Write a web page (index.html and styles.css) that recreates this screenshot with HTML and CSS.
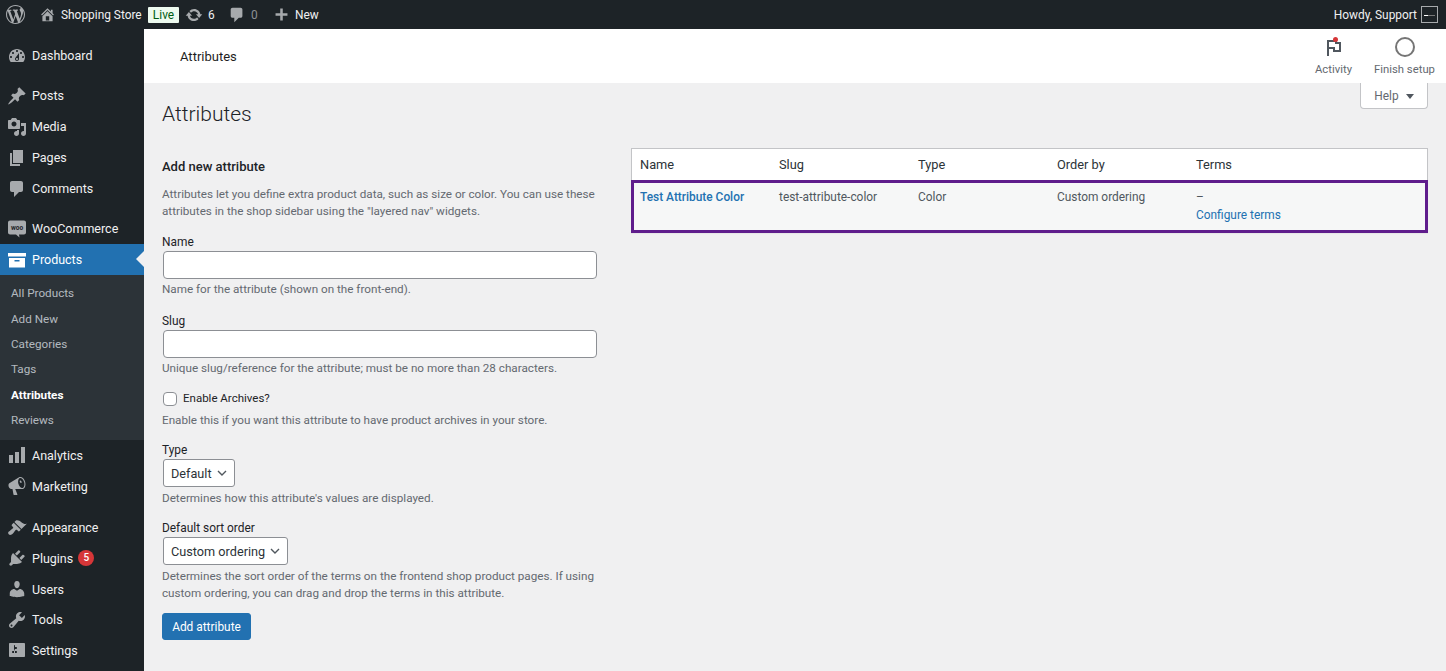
FILE: index.html
```html
<!DOCTYPE html>
<html lang="en">
  <head>
    <meta charset="UTF-8" />
    <title>Attributes</title>
    <link rel="stylesheet" href="styles.css">
  </head>

  <body>
    <header class="adminbar">
      <div class="bar-left">
        <svg class="bar-logo" viewBox="0 0 20 20"><path fill-rule="evenodd" d="M20 10c0-5.51-4.49-10-10-10C4.48 0 0 4.49 0 10c0 5.52 4.48 10 10 10 5.51 0 10-4.48 10-10zM7.78 15.37L4.37 6.22c.55-.02 1.17-.08 1.17-.08.5-.06.44-1.13-.06-1.11 0 0-1.45.11-2.37.11-.18 0-.37 0-.58-.01C4.12 2.69 6.87 1.11 10 1.11c2.33 0 4.45.87 6.05 2.34-.68-.11-1.65.39-1.65 1.58 0 .74.45 1.36.9 2.1.35.61.55 1.36.55 2.46 0 1.49-1.4 5-1.4 5l-3.03-8.37c.54-.02.82-.17.82-.17.5-.05.44-1.25-.06-1.22 0 0-1.44.12-2.38.12-.87 0-2.33-.12-2.33-.12-.5-.03-.56 1.2-.06 1.22l.92.08 1.26 3.41zM17.41 10c.24-.64.74-1.87.43-4.25.7 1.29 1.05 2.71 1.05 4.25 0 3.29-1.73 6.24-4.4 7.78.97-2.59 1.94-5.2 2.92-7.78zM6.1 18.09C3.12 16.65 1.11 13.53 1.11 10c0-1.3.23-2.48.72-3.59C3.25 10.3 4.67 14.2 6.1 18.09zm4.03-6.63l2.58 6.98c-.86.29-1.76.45-2.71.45-.79 0-1.57-.11-2.29-.33.81-2.38 1.62-4.74 2.42-7.1z"/></svg>
        <svg class="bar-home" viewBox="0 0 20 20"><path fill-rule="evenodd" d="M16 8.5l1.53 1.53-1.06 1.06L10 4.62l-6.47 6.47-1.06-1.06L10 2.5l4 4v-2h2v4zm-6-2.46l6 5.99V18H4v-5.97zM12 17v-5H8v5h4z"/></svg>
        <span class="bar-site">Shopping Store</span>
        <span class="bar-live">Live</span>
        <svg class="bar-update" viewBox="0 0 20 20"><path d="M10.2 3.28c3.53 0 6.43 2.61 6.92 6h2.08l-3.5 4-3.5-4h2.32c-.45-1.97-2.21-3.45-4.32-3.45-1.45 0-2.73.71-3.54 1.78L4.95 5.66C6.23 4.2 8.11 3.28 10.2 3.28zm-.4 13.44c-3.52 0-6.43-2.61-6.92-6H.8l3.5-4c1.17 1.33 2.33 2.67 3.5 4H5.48c.45 1.97 2.21 3.45 4.32 3.45 1.45 0 2.73-.71 3.54-1.78l1.71 1.95c-1.28 1.46-3.15 2.38-5.25 2.38z"/></svg>
        <span class="bar-count">6</span>
        <svg class="bar-comment" viewBox="0 0 20 20"><path d="M5 2h9c1.1 0 2 .9 2 2v7c0 1.1-.9 2-2 2h-2l-5 5v-5H5c-1.1 0-2-.9-2-2V4c0-1.1.9-2 2-2z"/></svg>
        <span class="bar-zero">0</span>
        <svg class="bar-plus" viewBox="0 0 20 20"><path d="M8.5 3h3v5.5H17v3h-5.5V17h-3v-5.5H3v-3h5.5z"/></svg>
        <span class="bar-new">New</span>
      </div>
      <div class="bar-right">
        <span>Howdy, Support</span>
        <span class="avatar"><i></i></span>
      </div>
    </header>

    <div class="layout">
      <nav class="sidebar">
        <ul class="menu">
          <li><svg viewBox="0 0 20 20"><path fill-rule="evenodd" d="M3.76 16h12.48c1.1-1.37 1.76-3.11 1.76-5 0-4.42-3.58-8-8-8s-8 3.58-8 8c0 1.89.66 3.63 1.76 5zM10 4c.55 0 1 .45 1 1s-.45 1-1 1-1-.45-1-1 .45-1 1-1zM6 6c.55 0 1 .45 1 1s-.45 1-1 1-1-.45-1-1 .45-1 1-1zm8 0c.55 0 1 .45 1 1s-.45 1-1 1-1-.45-1-1 .45-1 1-1zm-5.37 5.55L12 7v6c0 1.1-.9 2-2 2s-2-.9-2-2c0-.57.24-1.08.63-1.45zM4 10c.55 0 1 .45 1 1s-.45 1-1 1-1-.45-1-1 .45-1 1-1zm12 0c.55 0 1 .45 1 1s-.45 1-1 1-1-.45-1-1 .45-1 1-1zm-5 3c0-.55-.45-1-1-1s-1 .45-1 1 .45 1 1 1 1-.45 1-1z"/></svg>Dashboard</li>
        </ul>
        <ul class="menu">
          <li><svg viewBox="0 0 20 20"><path d="M10.44 3.02l1.82-1.82 6.36 6.35-1.83 1.82c-1.05-.68-2.48-.57-3.41.36l-.75.75c-.92.93-1.04 2.35-.35 3.41l-1.83 1.82-2.41-2.41-2.8 2.79c-.42.42-3.38 2.71-3.8 2.29s1.86-3.39 2.28-3.81l2.79-2.79L4.1 9.36l1.83-1.82c1.05.69 2.48.57 3.4-.36l.75-.75c.93-.92 1.05-2.35.36-3.41z"/></svg>Posts</li>
          <li><svg viewBox="0 0 20 20"><path fill-rule="evenodd" d="M13 11V4c0-.55-.45-1-1-1h-1.67L9 1H5L3.67 3H2c-.55 0-1 .45-1 1v7c0 .55.45 1 1 1h10c.55 0 1-.45 1-1zM7 4.5c1.38 0 2.5 1.12 2.5 2.5S8.38 9.5 7 9.5 4.5 8.38 4.5 7 5.62 4.5 7 4.5zM14 6h5v10.5c0 1.38-1.12 2.5-2.5 2.5S14 17.88 14 16.5s1.12-2.5 2.5-2.5c.17 0 .34.02.5.05V9h-3V6zm-4 8.05V13h2v3.5c0 1.38-1.12 2.5-2.5 2.5S7 17.88 7 16.5 8.12 14 9.5 14c.17 0 .34.02.5.05z"/></svg>Media</li>
          <li><svg viewBox="0 0 20 20"><path d="M6 15V2h10v13H6zm-1 1h8v2H3V5h2v11z"/></svg>Pages</li>
          <li><svg viewBox="0 0 20 20"><path d="M5 2h9c1.1 0 2 .9 2 2v7c0 1.1-.9 2-2 2h-2l-5 5v-5H5c-1.1 0-2-.9-2-2V4c0-1.1.9-2 2-2z"/></svg>Comments</li>
        </ul>
        <ul class="menu menu-store">
          <li><svg viewBox="0 0 20 20"><path d="M3 1.5h14c1 0 2 .8 2 2v10c0 1.2-1 2-2 2h-5l.5 3L9 15.5H3c-1 0-2-.8-2-2v-10c0-1.2 1-2 2-2z"/><text class="woo-mark" x="10" y="11">woo</text></svg>WooCommerce</li>
          <li class="current"><svg viewBox="0 0 20 20"><path fill-rule="evenodd" d="M1 3h18v3.5H1zM2 8h16v9.5H2zm5.5 2v1.4h5V10z"/></svg>Products</li>
        </ul>
        <ul class="submenu">
          <li>All Products</li>
          <li>Add New</li>
          <li>Categories</li>
          <li>Tags</li>
          <li class="sub-current">Attributes</li>
          <li>Reviews</li>
        </ul>
        <ul class="menu menu-shop">
          <li><svg viewBox="0 0 20 20"><path d="M18 18V2h-4v16h4zm-6 0V7H8v11h4zm-6 0v-8H2v8h4z"/></svg>Analytics</li>
          <li><svg viewBox="0 0 20 20"><path fill-rule="evenodd" d="M18.15 5.94c.46 1.62.38 3.22-.02 4.48-.42 1.28-1.26 2.18-2.3 2.48-.16.06-.26.06-.4.06-.06.02-.12.02-.18.02-.06.02-.14.02-.22.02h-6.8l2.22 5.5c.02.14-.06.26-.14.34-.08.1-.24.16-.34.16H6.95c-.1 0-.26-.06-.34-.16-.08-.08-.16-.2-.14-.34l-1-5.5H4.25l-.02-.02c-.5.06-1.08-.18-1.54-.62s-.88-1.08-1.06-1.88c-.24-.8-.2-1.56-.02-2.2.18-.62.58-1.08 1.06-1.3l.02-.02 9-5.4c.1-.06.18-.1.24-.16.06-.04.14-.08.24-.12.16-.08.28-.12.5-.18 1.04-.3 2.24.1 3.22.98s1.84 2.24 2.26 3.86zm-2.58 5.98h-.02c.4-.1.74-.34 1.04-.7.58-.7.86-1.76.86-3.04-.02-.64-.1-1.3-.28-1.98-.34-1.36-1.02-2.5-1.78-3.24s-1.68-1.1-2.46-.88c-.38.12-.72.34-1.02.7-.58.7-.84 1.76-.84 3.04.02.64.1 1.3.28 1.98.34 1.36 1 2.48 1.78 3.24.78.74 1.62 1.1 2.44.88zm-2.38-7.32c.46-.12 1.04.34 1.32 1.02.26.68.16 1.28-.3 1.4-.46.12-1.06-.34-1.32-1.02-.28-.68-.16-1.28.3-1.4z"/></svg>Marketing</li>
        </ul>
        <ul class="menu menu-tail">
          <li><svg viewBox="0 0 20 20"><path d="M14.48 11.06L7.41 3.99l1.5-1.5c.5-.56 2.3-.47 3.51.32 1.21.8 1.43 1.28 2.91 2.1 1.18.64 2.45 1.26 4.45.85zm-.71.71L6.7 4.7 4.93 6.47c-.39.39-.39 1.02 0 1.41l1.06 1.06c.39.39.39 1.03 0 1.42-.6.6-1.43 1.11-2.21 1.69-.35.26-.7.53-1.01.84C1.43 13.23.4 14.98 1.72 16.3c1.32 1.32 3.07.29 4.41-1.05.31-.31.58-.66.84-1.01.58-.78 1.09-1.61 1.69-2.21.39-.39 1.03-.39 1.42 0l1.06 1.06c.39.39 1.02.39 1.41 0z"/></svg>Appearance</li>
          <li><svg viewBox="0 0 20 20"><path d="M13.11 4.36L9.87 7.6 8 5.73l3.24-3.24c.35-.34 1.05-.2 1.56.32.52.51.66 1.21.31 1.55zm-8 1.77l.91-1.12 9.01 9.01-1.19.84c-.71.71-2.63 1.16-3.82 1.16H6.14L4.9 17.26c-.59.59-1.54.59-2.12 0-.59-.58-.59-1.53 0-2.12l1.24-1.24v-3.88c0-1.13.4-3.19 1.09-3.89zm7.26 3.97l3.24-3.24c.34-.35 1.04-.21 1.55.31.52.51.66 1.21.31 1.55l-3.24 3.25z"/></svg>Plugins<span class="badge">5</span></li>
          <li><svg viewBox="0 0 20 20"><path d="M10 9.25c-2.27 0-2.73-3.44-2.73-3.44C7 4.02 7.82 2 9.97 2c2.16 0 2.98 2.02 2.71 3.81 0 0-.41 3.44-2.68 3.44zm0 2.57L12.72 10c2.39 0 4.52 2.33 4.52 4.53v2.49s-3.65 1.13-7.24 1.13c-3.65 0-7.24-1.13-7.24-1.13v-2.49c0-2.25 1.94-4.48 4.47-4.48z"/></svg>Users</li>
          <li><svg viewBox="0 0 20 20"><path fill-rule="evenodd" d="M16.68 9.77c-1.34 1.34-3.3 1.67-4.95.99l-5.41 6.52c-.99.99-2.59.99-3.58 0s-.99-2.59 0-3.57l6.52-5.42c-.68-1.65-.35-3.61.99-4.95 1.28-1.28 3.12-1.62 4.72-1.06l-2.89 2.89 2.82 2.82 2.86-2.87c.53 1.58.18 3.39-1.08 4.65zM3.81 16.21c.4.39 1.04.39 1.43 0 .4-.4.4-1.04 0-1.43-.39-.4-1.03-.4-1.43 0-.39.39-.39 1.03 0 1.43z"/></svg>Tools</li>
          <li><svg viewBox="0 0 20 20"><path fill-rule="evenodd" d="M18 16V4c0-.55-.45-1-1-1H3c-.55 0-1 .45-1 1v12c0 .55.45 1 1 1h14c.55 0 1-.45 1-1zM8 11h1c.55 0 1 .45 1 1s-.45 1-1 1H8v1.5c0 .28-.22.5-.5.5s-.5-.22-.5-.5V13H6c-.55 0-1-.45-1-1s.45-1 1-1h1V5.5c0-.28.22-.5.5-.5s.5.22.5.5V7h1c.55 0 1 .45 1 1s-.45 1-1 1h-1v5.5c0 .28-.22.5-.5.5s-.5-.22-.5-.5V9z"/></svg>Settings</li>
        </ul>
      </nav>

      <div class="content">
        <div class="topbar">
          <span class="topbar-title">Attributes</span>
          <div class="topbar-actions">
            <div class="action action-activity">
              <span class="flag">
                <svg viewBox="0 0 20 20"><path fill="none" stroke="#50575e" stroke-width="2" d="M4 19V4h8v2h4v8h-6v-3H4"/></svg>
                <i class="flag-dot"></i>
              </span>
              <span>Activity</span>
            </div>
            <div class="action action-setup">
              <i class="ring"></i>
              <span>Finish setup</span>
            </div>
          </div>
        </div>

        <div class="help-tab">Help <i class="help-arrow"></i></div>

        <main class="page">
          <h1>Attributes</h1>
          <div class="columns">
            <form class="col-form">
              <h2>Add new attribute</h2>
              <p class="desc desc-lines">Attributes let you define extra product data, such as size or color. You can use these<br>attributes in the shop sidebar using the "layered nav" widgets.</p>

              <div class="field">
                <label>Name</label>
                <input type="text">
                <p class="desc">Name for the attribute (shown on the front-end).</p>
              </div>

              <div class="field">
                <label>Slug</label>
                <input type="text">
                <p class="desc">Unique slug/reference for the attribute; must be no more than 28 characters.</p>
              </div>

              <div class="field field-check">
                <label class="check-label"><input type="checkbox"> Enable Archives?</label>
                <p class="desc">Enable this if you want this attribute to have product archives in your store.</p>
              </div>

              <div class="field field-type">
                <label>Type</label>
                <select class="select-type"><option>Default</option></select>
                <p class="desc">Determines how this attribute's values are displayed.</p>
              </div>

              <div class="field field-sort">
                <label>Default sort order</label>
                <select class="select-order"><option>Custom ordering</option></select>
                <p class="desc desc-lines">Determines the sort order of the terms on the frontend shop product pages. If using<br>custom ordering, you can drag and drop the terms in this attribute.</p>
              </div>

              <button type="button" class="btn-primary">Add attribute</button>
            </form>

            <div class="col-table">
              <table>
                <thead>
                  <tr>
                    <th>Name</th>
                    <th>Slug</th>
                    <th>Type</th>
                    <th>Order by</th>
                    <th class="col-terms">Terms</th>
                  </tr>
                </thead>
                <tbody>
                  <tr class="row-marked">
                    <td><a class="row-name">Test Attribute Color</a></td>
                    <td>test-attribute-color</td>
                    <td>Color</td>
                    <td>Custom ordering</td>
                    <td>–<br><a>Configure terms</a></td>
                  </tr>
                </tbody>
              </table>
            </div>
          </div>
        </main>
      </div>
    </div>
  </body>
</html>
```

FILE: styles.css
```css
* {
  box-sizing: border-box;
}

html,
body {
  margin: 0;
  height: 671px;
  overflow: hidden;
}

body {
  background-color: #f0f0f1;
  color: #50575e;
  font-family: Roboto, "Open Sans", sans-serif;
  font-size: 11.9px;
  line-height: 17px;
}

ul {
  list-style: none;
  margin: 0;
  padding: 0;
}

/* admin bar */
.adminbar {
  display: flex;
  justify-content: space-between;
  align-items: center;
  height: 29px;
  padding: 0 8px 0 6px;
  background-color: #1d2327;
  color: #f0f0f1;
}

.adminbar span {
  padding-top: 1px;
}

.bar-left,
.bar-right {
  display: flex;
  align-items: center;
}

.adminbar svg {
  fill: #a7aaad;
  flex: none;
}

.bar-logo {
  width: 19px;
  height: 19px;
  margin-right: 14px;
}

.bar-home {
  width: 17px;
  height: 17px;
  margin-right: 5px;
}

.bar-site {
  width: 81px;
  white-space: nowrap;
  margin-right: 6px;
}

.bar-live {
  width: 31px;
  height: 16px;
  line-height: 15px;
  text-align: center;
  background-color: #edfaef;
  color: #005c12;
  border-radius: 1px;
  margin-right: 6px;
}

.bar-update {
  width: 18px;
  height: 18px;
  margin-right: 5px;
}

.bar-count {
  width: 7px;
  margin-right: 13px;
}

.bar-comment {
  width: 18px;
  height: 18px;
  margin-right: 5px;
}

.bar-zero {
  width: 8px;
  color: #8c8f94;
  margin-right: 14px;
}

.bar-plus {
  width: 17px;
  height: 17px;
  margin-right: 5px;
}

.avatar {
  display: flex;
  align-items: center;
  justify-content: center;
  width: 17px;
  height: 17px;
  margin-left: 4px;
  background-color: #1d2327;
  border: 1px solid #a7aaad;
}

.avatar i {
  width: 11px;
  height: 1px;
  background: linear-gradient(to right, #fff 40%, #777 40%);
}

/* sidebar */
.layout {
  display: flex;
  height: 642px;
}

.sidebar {
  flex: none;
  width: 144px;
  padding-top: 11px;
  background-color: #1d2327;
}

.menu {
  margin-bottom: 9px;
  color: #f0f0f1;
  font-size: 12.5px;
}

.menu-store {
  margin-bottom: 0;
}

.menu-shop {
  margin-bottom: 10.5px;
}

.menu li {
  display: flex;
  align-items: center;
  height: 31px;
  padding-left: 7px;
}

.menu-tail li {
  height: 30.67px;
}

.menu li svg {
  flex: none;
  width: 20px;
  height: 20px;
  margin-right: 5px;
  fill: #a7aaad;
}

.woo-mark {
  font-size: 6.5px;
  font-weight: 700;
  fill: #1d2327;
  text-anchor: middle;
}

.menu li.current {
  position: relative;
  background-color: #2271b1;
  color: #fff;
}

.menu li.current svg {
  fill: #fff;
}

.menu li.current::after {
  content: "";
  position: absolute;
  right: 0;
  top: 7px;
  border: 8px solid transparent;
  border-right-color: #f0f0f1;
  border-left-width: 0;
}

.submenu {
  padding: 6.3px 0 6.7px;
  background-color: #2c3338;
  color: rgba(240, 246, 252, 0.7);
  font-size: 11.7px;
}

.submenu li {
  height: 25.33px;
  line-height: 25px;
  padding-left: 11px;
}

.sub-current {
  color: #fff;
  font-weight: 700;
}

.badge {
  width: 16px;
  height: 16px;
  margin-left: 5px;
  border-radius: 50%;
  background-color: #d63638;
  color: #fff;
  font-size: 10px;
  font-weight: 500;
  line-height: 16px;
  text-align: center;
}

/* content */
.content {
  position: relative;
  flex: 1;
  min-width: 0;
}

.topbar {
  display: flex;
  justify-content: space-between;
  align-items: center;
  height: 54px;
  padding-left: 36px;
  background-color: #fff;
}

.topbar-title {
  color: #1e1e1e;
  font-size: 13px;
}

.topbar-actions {
  display: flex;
  align-items: flex-start;
  height: 100%;
  padding-right: 11px;
  color: #646970;
  font-size: 11.3px;
}

.action {
  display: flex;
  flex-direction: column;
  align-items: center;
  padding-top: 8px;
  white-space: nowrap;
}

.action-activity {
  width: 41px;
  margin-right: 20px;
}

.action-setup {
  width: 61px;
}

.flag {
  position: relative;
  display: block;
  width: 20px;
  height: 20px;
  margin-bottom: 4px;
}

.flag svg {
  display: block;
  width: 20px;
  height: 20px;
}

.flag-dot {
  position: absolute;
  top: 0;
  right: 6px;
  width: 5px;
  height: 5px;
  border-radius: 50%;
  background-color: #d63638;
}

.ring {
  display: block;
  width: 20px;
  height: 20px;
  margin-bottom: 4px;
  border: 2px solid #757575;
  border-radius: 50%;
}

.help-tab {
  position: absolute;
  top: 54px;
  right: 18px;
  display: flex;
  align-items: center;
  justify-content: center;
  gap: 7px;
  width: 68px;
  height: 26px;
  padding-top: 1px;
  background-color: #fff;
  border: 1px solid #c3c4c7;
  border-top: none;
  border-radius: 0 0 4px 4px;
  color: #646970;
}

.help-arrow {
  border: 4px solid transparent;
  border-top: 5px solid #50575e;
  border-bottom-width: 0;
}

.page {
  padding: 15px 18px 0;
}

h1 {
  margin: 0;
  padding-top: 2px;
  color: #1d2327;
  font-size: 21px;
  font-weight: 300;
  line-height: 28px;
}

.columns {
  display: grid;
  grid-template-columns: 435px 1fr;
  column-gap: 34px;
  margin-top: 20px;
}

.col-form {
  padding-top: 10px;
}

h2 {
  margin: 0 0 11px;
  color: #1d2327;
  font-size: 13px;
  font-weight: 500;
  line-height: 17px;
}

.desc {
  margin: 0;
  color: #646970;
  font-size: 11.7px;
}

.desc-lines {
  white-space: nowrap;
}

.col-form > .desc {
  margin-bottom: 14px;
}

.field {
  margin-bottom: 15px;
}

.field label {
  display: block;
  color: #1d2327;
}

.field input[type="text"] {
  display: block;
  width: 434px;
  height: 28px;
  margin: 0 0 2px 1px;
  background-color: #fff;
  border: 1px solid #8c8f94;
  border-radius: 4px;
}

.field-check {
  margin-top: -2px;
  margin-bottom: 13px;
}

.field-check .desc {
  margin-top: 5px;
}

.field-type {
  margin-bottom: 14px;
}

.field-sort {
  margin-top: -1px;
  margin-bottom: 11px;
}

.check-label {
  display: flex !important;
  align-items: center;
  gap: 6px;
  font-size: 11.5px;
}

.check-label input {
  appearance: none;
  width: 14px;
  height: 14px;
  margin: 0 0 0 1px;
  background-color: #fff;
  border: 1px solid #8c8f94;
  border-radius: 4px;
}

select {
  appearance: none;
  display: block;
  height: 28px;
  margin: 0 0 3px 1px;
  padding: 0 20px 0 7px;
  background: #fff url("data:image/svg+xml;utf8,<svg xmlns='http://www.w3.org/2000/svg' width='10' height='6'><path d='M1 1l4 4 4-4' fill='none' stroke='%2350575e' stroke-width='1.4'/></svg>") no-repeat right 7px center;
  border: 1px solid #8c8f94;
  border-radius: 3px;
  color: #2c3338;
  font-family: inherit;
  font-size: 12.7px;
}

.select-type {
  width: 72px;
}

.select-order {
  width: 125px;
}

.btn-primary {
  display: block;
  width: 89px;
  height: 27px;
  padding: 0;
  background-color: #2271b1;
  border: 1px solid #2271b1;
  border-radius: 3px;
  color: #fff;
  font-family: inherit;
  font-size: inherit;
}

/* table */
.col-table {
  align-self: start;
  background-color: #fff;
  border: 1px solid #c3c4c7;
  box-shadow: 0 1px 1px rgba(0, 0, 0, 0.04);
}

table {
  width: 100%;
  table-layout: fixed;
  border-collapse: collapse;
}

th {
  width: 139px;
  height: 32px;
  padding: 0 8px 2px;
  color: #2c3338;
  font-size: 12.8px;
  font-weight: 400;
  text-align: left;
}

th.col-terms {
  width: auto;
}

td {
  height: 51px;
  padding: 7px 8px 0;
  line-height: 18px;
  vertical-align: top;
}

.row-marked {
  background-color: #f6f7f7;
  outline: 3px solid #5f1d8c;
  outline-offset: -2px;
}

a {
  color: #2271b1;
}

.row-name {
  font-weight: 500;
}
```
